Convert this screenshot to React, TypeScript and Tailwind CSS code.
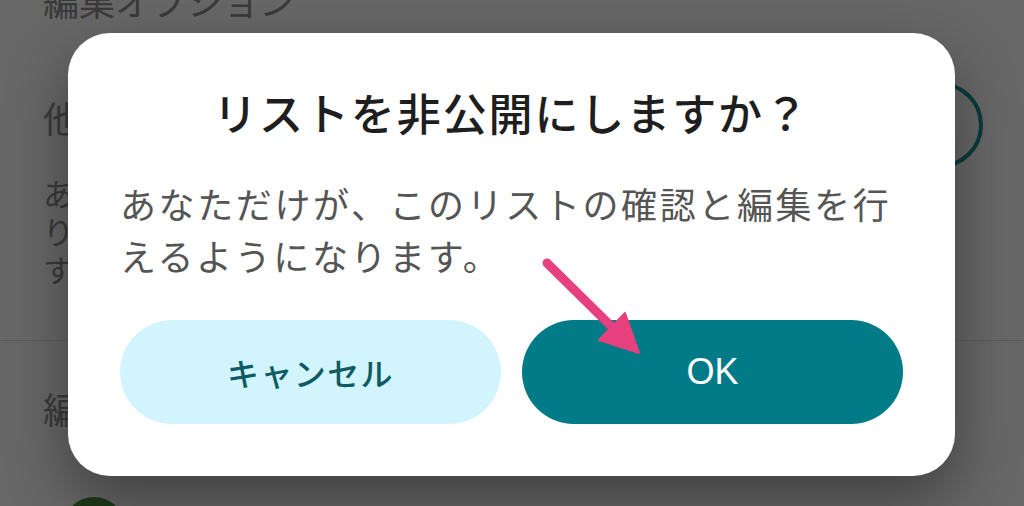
import React from 'react';

// 背景の設定画面（ダイアログの下に隠れている部分）
function BackgroundPage() {
  return (
    <div className="flex flex-col pl-[43px] pr-[41px] text-[#3a3a3a]">
      <p className="-mt-[22px] text-[36px] leading-[44px] whitespace-nowrap">編集オプション</p>

      <div className="mt-[73px] flex items-start justify-between">
        <div className="flex flex-col">
          <p className="text-[36px] leading-[44px] whitespace-nowrap">他の人</p>
          <div className="mt-[35px] flex flex-col text-[31px] leading-[38px] whitespace-nowrap">
            <span>あな</span>
            <span>りま</span>
            <span>す。</span>
          </div>
        </div>
        <div className="-mt-[13px] h-[86px] w-[86px] rounded-full border-[4px] border-[#0b3a3e]" />
      </div>

      <div className="mt-[52px] -ml-[43px] -mr-[41px] h-px bg-[#5a5a5a]" />

      <p className="mt-[45px] text-[36px] leading-[44px] whitespace-nowrap">編集者</p>

      <div className="mt-[67px] ml-[20px] h-[62px] w-[62px] shrink-0 rounded-full bg-[#1e3a18]" />
    </div>
  );
}

function ConfirmDialog() {
  return (
    <div className="absolute left-[68px] top-[33px] flex w-[887px] flex-col rounded-[42px] bg-white px-[52px] pt-[53px] pb-[52px] shadow-[0_24px_60px_rgba(0,0,0,0.38)]">
      <h2 className="text-center text-[44px] font-medium leading-[53px] tracking-[1.9px] text-[#1e1e1e]">
        リストを非公開にしますか？
      </h2>
      <p className="mt-[38px] text-[36px] leading-[52px] tracking-[2.6px] text-[#555555]">
        あなただけが、このリストの確認と編集を行えるようになります。
      </p>
      <div className="mt-[39px] flex gap-[21px]">
        <button className="flex h-[104px] flex-1 items-center justify-center rounded-full bg-[#d2f5fd] text-[32px] font-medium tracking-[1.4px] text-[#0f5a63]">
          キャンセル
        </button>
        <button className="flex h-[104px] flex-1 items-center justify-center rounded-full bg-[#007b87] font-['Liberation_Sans',sans-serif] text-[36px] font-normal text-white">
          OK
        </button>
      </div>
    </div>
  );
}

// 注目ポイントの矢印
function PinkArrow() {
  return (
    <svg className="absolute left-0 top-0" width="1024" height="506" viewBox="0 0 1024 506">
      <line x1="547" y1="263" x2="616" y2="331" stroke="#e6407f" strokeWidth="9" strokeLinecap="round" />
      <polygon points="639,353 599,340 625,313" fill="#e6407f" stroke="#e6407f" strokeWidth="2" strokeLinejoin="round" />
    </svg>
  );
}

export default function App() {
  return (
    <div className="relative h-[506px] w-full overflow-hidden bg-[#676767] font-['Noto_Sans_CJK_JP',sans-serif]">
      <BackgroundPage />
      <ConfirmDialog />
      <PinkArrow />
    </div>
  );
}
